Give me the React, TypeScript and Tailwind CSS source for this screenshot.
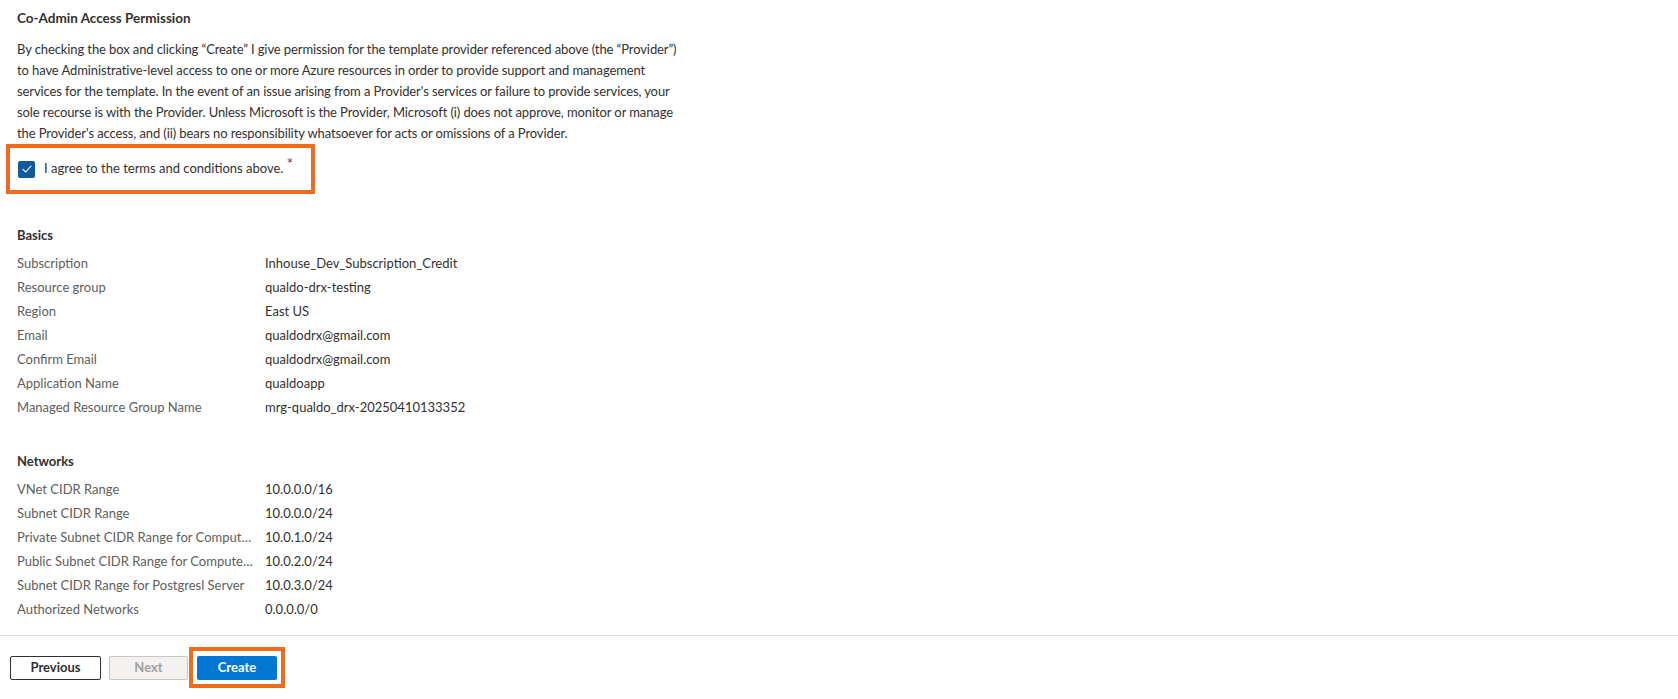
import React from 'react';

const basics: [string, string][] = [
    ['Subscription', 'Inhouse_Dev_Subscription_Credit'],
    ['Resource group', 'qualdo-drx-testing'],
    ['Region', 'East US'],
    ['Email', 'qualdodrx@gmail.com'],
    ['Confirm Email', 'qualdodrx@gmail.com'],
    ['Application Name', 'qualdoapp'],
    ['Managed Resource Group Name', 'mrg-qualdo_drx-20250410133352'],
];

const networks: [string, string][] = [
    ['VNet CIDR Range', '10.0.0.0/16'],
    ['Subnet CIDR Range', '10.0.0.0/24'],
    ['Private Subnet CIDR Range for Compute Cluster', '10.0.1.0/24'],
    ['Public Subnet CIDR Range for Compute Cluster', '10.0.2.0/24'],
    ['Subnet CIDR Range for Postgresl Server', '10.0.3.0/24'],
    ['Authorized Networks', '0.0.0.0/0'],
];

// wrapped the same way the portal wraps it
const permissionLines = [
    'By checking the box and clicking “Create” I give permission for the template provider referenced above (the “Provider”)',
    'to have Administrative-level access to one or more Azure resources in order to provide support and management',
    "services for the template. In the event of an issue arising from a Provider's services or failure to provide services, your",
    'sole recourse is with the Provider. Unless Microsoft is the Provider, Microsoft (i) does not approve, monitor or manage',
    "the Provider's access, and (ii) bears no responsibility whatsoever for acts or omissions of a Provider.",
];

const Section: React.FC<{ title: string; rows: [string, string][] }> = ({ title, rows }) => (
    <div>
        <h3 className="font-bold leading-[21px] text-[#323130]">{title}</h3>
        <div className="mt-[6px]">
            {rows.map(([label, value]) => (
                <div key={label} className="grid grid-cols-[248px_1fr] h-[24px] items-center">
                    <span className="truncate pr-[10px] text-[#605e5c]">{label}</span>
                    <span className="text-[#323130]">{value}</span>
                </div>
            ))}
        </div>
    </div>
);

const App: React.FC = () => {
    return (
        <div className="min-h-screen bg-white text-[13px] text-[#323130] font-['Lato','Liberation_Sans',sans-serif]">
            <div className="px-[17px] pt-[8px]">
                <h2 className="font-bold text-[13.5px] leading-[21px]">Co-Admin Access Permission</h2>
                <p className="mt-[10px] leading-[21px] tracking-[-0.1px]">
                    {permissionLines.map(line => (
                        <span key={line} className="block whitespace-nowrap">{line}</span>
                    ))}
                </p>
                <div className="ml-[-11px] w-[309px] h-[50px] border-[4px] border-[#f26a1b] flex items-center pl-[8px]">
                    <span className="w-[17px] h-[17px] rounded-[2px] bg-[#0f5a9c] flex items-center justify-center">
                        <svg width="12" height="12" viewBox="0 0 12 12" fill="none">
                            <path d="M2 6.3 L4.8 9 L10 3" stroke="white" strokeWidth="1.1" strokeLinecap="round" strokeLinejoin="round" />
                        </svg>
                    </span>
                    <span className="ml-[9px]">I agree to the terms and conditions above.</span>
                    <span className="text-[#a4262c] self-start mt-[7px] ml-[3px] text-[16px] leading-none">*</span>
                </div>

                <div className="mt-[31px]">
                    <Section title="Basics" rows={basics} />
                </div>
                <div className="mt-[31px]">
                    <Section title="Networks" rows={networks} />
                </div>
            </div>

            <div className="mt-[13px] border-t border-[#e1dfdd]" />

            <div className="flex items-center pl-[10px] pt-[11px]">
                <button className="w-[91px] h-[24px] border border-[#323130] rounded-[2px] font-bold text-[13px] text-[#323130] bg-white">
                    Previous
                </button>
                <button className="ml-[8px] w-[79px] h-[24px] border border-[#c8c6c4] rounded-[2px] font-bold text-[13px] text-[#a19f9d] bg-[#f3f2f1]">
                    Next
                </button>
                <div className="ml-[1px] border-[4px] border-[#f26a1b] p-[4px] pt-[5px]">
                    <button className="w-[80px] h-[24px] rounded-[2px] font-bold text-[13px] text-white bg-[#0078d4]">
                        Create
                    </button>
                </div>
            </div>
        </div>
    );
};

export default App;
